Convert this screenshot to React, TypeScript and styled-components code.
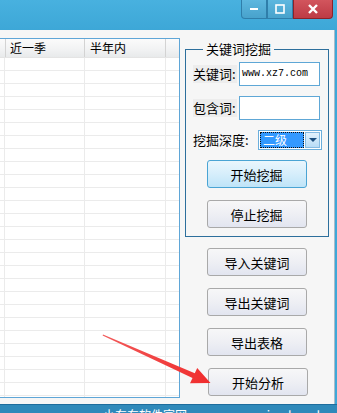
import React from 'react';
import styled, { createGlobalStyle } from 'styled-components';

const GlobalStyle = createGlobalStyle`
  html, body {
    margin: 0;
    padding: 0;
    background: #3ea8d8;
  }
  body {
    font-family: "Noto Sans CJK SC", "Noto Sans", sans-serif;
    color: #000;
  }
`;

const Frame = styled.div`
  position: relative;
  width: 337px;
  height: 413px;
  overflow: hidden;
  display: flex;
  flex-direction: column;
  background: #3ea8d8;
`;

const TitleBar = styled.div`
  flex: none;
  height: 30px;
  display: flex;
  justify-content: flex-end;
  align-items: flex-start;
  padding-right: 4px;
  background: linear-gradient(#48b1df, #3da7d7);
`;

const WinButtons = styled.div`
  display: flex;
  height: 19px;
`;

const WinBtn = styled.div<{ $close?: boolean; $w: number }>`
  box-sizing: border-box;
  width: ${p => p.$w}px;
  height: 19px;
  display: flex;
  align-items: center;
  justify-content: center;
  border: 1px solid ${p => (p.$close ? '#8c2229' : '#2f7eaa')};
  border-top: none;
  background: ${p =>
    p.$close
      ? 'linear-gradient(#d2555d, #bd3b45)'
      : 'linear-gradient(#5db7df, #48a2cc)'};
  &:first-child {
    border-bottom-left-radius: 4px;
  }
  &:last-child {
    border-bottom-right-radius: 4px;
  }
`;

const Body = styled.div`
  flex: 1;
  display: flex;
  margin-right: 2px;
  background: #f6f6f6;
  border-right: 1px solid #a9bccb;
  min-height: 0;
`;

const TablePane = styled.div`
  width: 180px;
  flex: none;
  padding: 8px 0 6px;
  display: flex;
  flex-direction: column;
`;

const Table = styled.div`
  flex: 1;
  background: #fff;
  border: 1px solid #5fa6d7;
  border-left: none;
  overflow: hidden;
`;

const Cols = '5px 80px 81px 1fr';

const HeaderRow = styled.div`
  display: grid;
  grid-template-columns: ${Cols};
  height: 18px;
  border-bottom: 1px solid #e4e4e4;
  background: linear-gradient(#fbfbfb, #f1f2f3 60%, #e8eaeb);
`;

const HeaderCell = styled.div`
  box-sizing: border-box;
  border-right: 1px solid #d3d3d3;
  padding-left: 5px;
  font-size: 12px;
  line-height: 18px;
  &:last-child {
    border-right: none;
  }
`;

const Row = styled.div`
  display: grid;
  grid-template-columns: ${Cols};
  height: 13px;
  box-sizing: border-box;
  border-bottom: 1px solid #ebebeb;
`;

const Cell = styled.div`
  border-right: 1px solid #ebebeb;
  &:last-child {
    border-right: none;
  }
`;

const Side = styled.div`
  width: 144px;
  margin-left: 5px;
  padding-top: 11px;
  display: flex;
  flex-direction: column;
  align-items: center;
`;

const Group = styled.fieldset`
  box-sizing: border-box;
  width: 144px;
  margin: 0;
  padding: 0 8px 8px 7px;
  border: 1px solid #2d6f9c;
  display: flex;
  flex-direction: column;
  align-items: stretch;
`;

const Legend = styled.legend`
  margin-left: 10px;
  padding: 0 3px;
  font-size: 13px;
  line-height: 16px;
`;

const FieldRow = styled.div<{ $mt: number; $pr?: number }>`
  display: flex;
  align-items: center;
  margin-top: ${p => p.$mt}px;
  margin-right: ${p => -(p.$pr ?? 0)}px;
`;

const Label = styled.span<{ $bg?: boolean }>`
  font-size: 13px;
  line-height: 18px;
  padding-right: 1px;
  background: ${p => (p.$bg ? '#ededed' : 'transparent')};
  white-space: nowrap;
`;

const TextBox = styled.div`
  box-sizing: border-box;
  width: 81px;
  height: 24px;
  margin-left: auto;
  background: #fff;
  border: 1px solid #5ea7d6;
  padding-left: 2px;
  color: #000;
  font-family: "Liberation Mono", "DejaVu Sans Mono", monospace;
  font-size: 10px;
  line-height: 22px;
  white-space: nowrap;
`;

const Combo = styled.div`
  box-sizing: border-box;
  width: 64px;
  height: 20px;
  margin-left: auto;
  background: #fff;
  border: 1px solid #6aaedc;
  padding: 1px;
  display: flex;
  gap: 1px;
`;

const ComboValue = styled.div`
  flex: 1;
  box-sizing: border-box;
  background: #3399ff;
  border: 1px dotted #111;
  color: #fff;
  font-size: 12px;
  line-height: 14px;
  padding-left: 2px;
`;

const ComboArrow = styled.div`
  width: 15px;
  box-sizing: border-box;
  border: 1px solid #86bbe2;
  background: linear-gradient(#e3f2fd, #b8dcf6);
  display: flex;
  align-items: center;
  justify-content: center;
`;

const Button = styled.div<{ $hot?: boolean; $mt: number; $dx?: number }>`
  box-sizing: border-box;
  width: 100px;
  height: 28px;
  margin-top: ${p => p.$mt}px;
  margin-left: ${p => (p.$dx ?? 0) * 2}px;
  align-self: center;
  display: flex;
  align-items: center;
  justify-content: center;
  border-radius: 3px;
  border: 1px solid ${p => (p.$hot ? '#4aa4d4' : '#a9a9a9')};
  background: ${p =>
    p.$hot
      ? 'linear-gradient(#eaf6fd, #d6eefb 50%, #bfe4f8)'
      : 'linear-gradient(#f7f7f8, #eeeff4 50%, #e2e5f0)'};
  font-size: 13px;
  line-height: 1;
`;

// watermark strip along the bottom edge, cut off by the screenshot
const Footer = styled.div`
  flex: none;
  height: 9px;
  box-sizing: border-box;
  border-top: 1px solid #1e6d9d;
  background: #2f89ba;
  display: flex;
  gap: 42px;
  padding: 3px 0 0 103px;
  overflow: hidden;
  color: #fff;
  font-size: 12px;
  line-height: 14px;
  white-space: nowrap;
`;

const Overlay = styled.svg`
  position: absolute;
  left: 0;
  top: 0;
  pointer-events: none;
`;

const rows = Array.from({ length: 28 }, (_, i) => i);

export default function App() {
  return (
    <>
      <GlobalStyle />
      <Frame>
        <TitleBar>
          <WinButtons>
            <WinBtn $w={26}>
              <svg width="10" height="10" viewBox="0 0 10 10">
                <rect x="1" y="4" width="8" height="2" fill="#fff" />
              </svg>
            </WinBtn>
            <WinBtn $w={26}>
              <svg width="10" height="10" viewBox="0 0 10 10">
                <rect x="1" y="1" width="8" height="8" fill="none" stroke="#fff" strokeWidth="1.6" />
              </svg>
            </WinBtn>
            <WinBtn $w={40} $close>
              <svg width="12" height="10" viewBox="0 0 12 10">
                <path d="M2 1 L10 9 M10 1 L2 9" stroke="#fff" strokeWidth="2.4" />
              </svg>
            </WinBtn>
          </WinButtons>
        </TitleBar>

        <Body>
          <TablePane>
            <Table>
              <HeaderRow>
                <HeaderCell />
                <HeaderCell>近一季</HeaderCell>
                <HeaderCell>半年内</HeaderCell>
                <HeaderCell />
              </HeaderRow>
              {rows.map(r => (
                <Row key={r}>
                  <Cell />
                  <Cell />
                  <Cell />
                  <Cell />
                </Row>
              ))}
            </Table>
          </TablePane>

          <Side>
            <Group>
              <Legend>关键词挖掘</Legend>
              <FieldRow $mt={5}>
                <Label $bg>关键词:</Label>
                <TextBox>www.xz7.com</TextBox>
              </FieldRow>
              <FieldRow $mt={10}>
                <Label $bg>包含词:</Label>
                <TextBox />
              </FieldRow>
              <FieldRow $mt={10} $pr={2}>
                <Label>挖掘深度:</Label>
                <Combo>
                  <ComboValue>二级</ComboValue>
                  <ComboArrow>
                    <svg width="8" height="5" viewBox="0 0 8 5">
                      <path d="M0 0 H8 L4 4 Z" fill="#1d4f80" />
                    </svg>
                  </ComboArrow>
                </Combo>
              </FieldRow>
              <Button $hot $mt={10}>开始挖掘</Button>
              <Button $mt={12}>停止挖掘</Button>
            </Group>
            <Button $mt={11}>导入关键词</Button>
            <Button $mt={12}>导出关键词</Button>
            <Button $mt={12}>导出表格</Button>
            <Button $mt={12} $dx={1}>开始分析</Button>
          </Side>
        </Body>

        <Footer>
          <span>小东东软件官网</span>
          <span>www.xiaodongdong.com</span>
        </Footer>

        <Overlay width="337" height="413" viewBox="0 0 337 413">
          <defs>
            <linearGradient id="arrowFill" x1="0" y1="0" x2="1" y2="0">
              <stop offset="0" stopColor="#f25a5a" />
              <stop offset="1" stopColor="#f02c2c" />
            </linearGradient>
          </defs>
          <polygon
            points="103,334.6 194.8,373.2 197.2,368 210.5,383 190,383.2 192.5,378 102.6,335.4"
            fill="url(#arrowFill)"
          />
        </Overlay>
      </Frame>
    </>
  );
}
